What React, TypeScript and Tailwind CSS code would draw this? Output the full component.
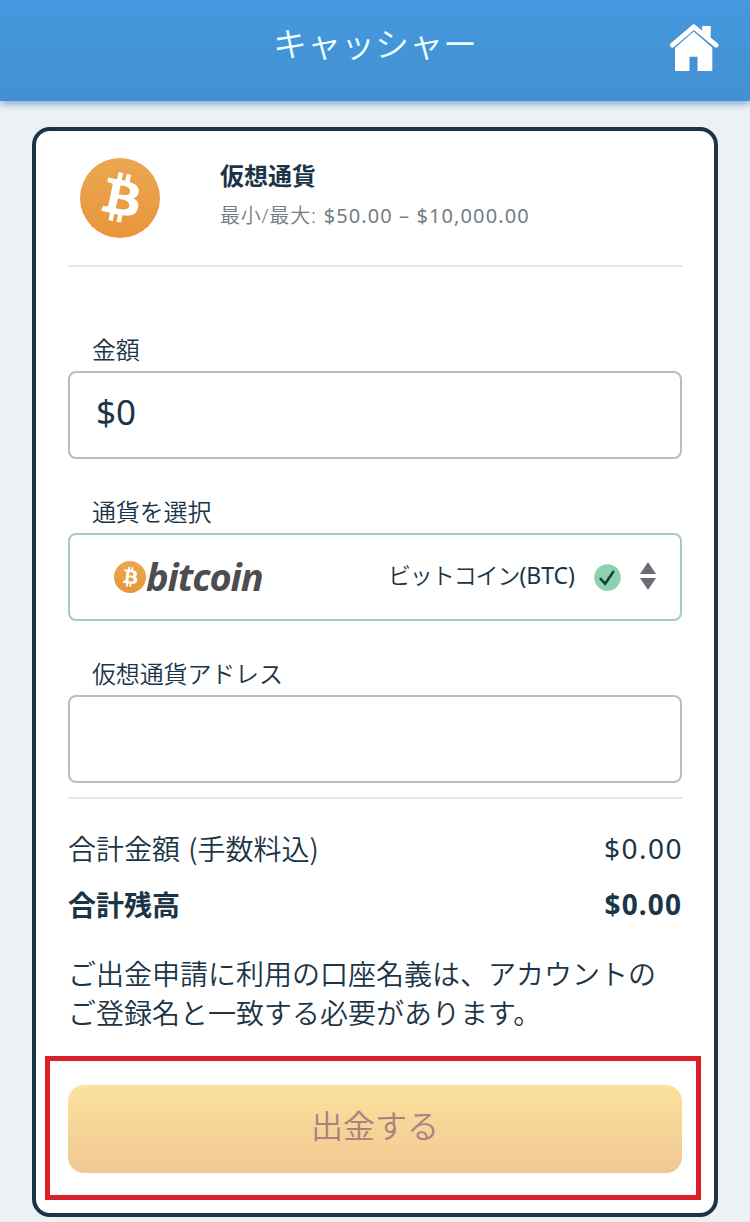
import React from "react";

function HomeIcon() {
  return (
    <svg width="49" height="48" viewBox="0 0 49 48" fill="white" aria-hidden="true">
      <path d="M32.3 10V2h8.2v16z" />
      <path d="M5 23.5 23.8 5.8 42.3 23.5V47H27.5V32.7h-8V47H5z" />
      <path d="M1.6 22 23.8 2.5 46.4 22" fill="none" stroke="#4294d6" strokeWidth="7.6" />
      <path d="M2.4 21.2 23.8 2.8 46 21.2" fill="none" stroke="white" strokeWidth="4.9" strokeLinecap="round" strokeLinejoin="round" />
      <path d="M32.3 2h8.2v13.5l-8.2-6.6z" />
    </svg>
  );
}

function Coin({ size, id, transform }: { size: number; id: string; transform: string }) {
  return (
    <svg width={size} height={size} viewBox="0 0 24 24" aria-hidden="true">
      <linearGradient id={id} x1="0" y1="0" x2="0" y2="1">
        <stop stopColor="#eaa851" />
        <stop offset="1" stopColor="#e9953a" />
      </linearGradient>
      <circle cx="12" cy="12" r="12" fill={`url(#${id})`} />
      <path
        transform={transform}
        fill="white"
        d="M17.288 10.291c.24-1.59-.974-2.45-2.64-3.03l.54-2.153-1.315-.33-.525 2.107c-.345-.087-.705-.167-1.064-.25l.526-2.127-1.32-.33-.54 2.165c-.285-.067-.565-.132-.84-.2l-1.815-.45-.35 1.407s.975.225.955.236c.535.136.63.486.615.766l-1.477 5.92c-.075.166-.24.406-.614.314.015.02-.96-.24-.96-.24l-.66 1.51 1.71.426.93.242-.54 2.19 1.32.327.54-2.17c.36.1.705.19 1.05.273l-.51 2.154 1.32.33.545-2.19c2.24.427 3.93.257 4.64-1.774.57-1.637-.03-2.58-1.217-3.196.854-.193 1.5-.76 1.68-1.93h.01zm-3.01 4.22c-.404 1.64-3.157.75-4.05.53l.72-2.9c.896.23 3.757.67 3.33 2.37zm.41-4.24c-.37 1.49-2.662.735-3.405.55l.654-2.64c.744.18 3.137.524 2.75 2.084v.006z"
      />
    </svg>
  );
}

function CheckBadge() {
  return (
    <svg width="27" height="27" viewBox="0 0 27 27" fill="none" aria-hidden="true">
      <circle cx="13.5" cy="13.5" r="13.3" fill="#8fd0b1" />
      <path d="m6.6 14.8 4.6 5L19.3 7.7" stroke="#123f3c" strokeWidth="2.5" strokeLinecap="round" />
    </svg>
  );
}

function SortArrows() {
  return (
    <svg width="16" height="28" viewBox="0 0 16 28" fill="#686c76" aria-hidden="true">
      <path d="M8 0l8 12H0zM8 28l8-12H0z" />
    </svg>
  );
}

function Label({ children }: { children: React.ReactNode }) {
  return <div className="flex h-[42px] items-center pl-6 text-[24px] leading-none tracking-[-0.15px]">{children}</div>;
}

const fieldClass = "flex h-[88px] items-center rounded-lg border-2 bg-white";

export default function App() {
  return (
    <div className="h-[1222px] overflow-hidden bg-[#ecf1f6] font-['Noto_Sans','Noto_Sans_CJK_JP',sans-serif] font-[350] text-[#1b3547]">
      <header className="grid h-[101px] grid-cols-[80px_1fr_80px] bg-linear-to-b from-[#4599de] to-[#4290d1] shadow-[0_3px_7px_rgba(65,125,175,0.6)]">
        <span />
        <h1 className="pt-[25px] text-center font-['Noto_Sans_CJK_JP',sans-serif] text-[34px] leading-[36px] font-[350] text-[#edffff]">キャッシャー</h1>
        <div className="pt-6">
          <HomeIcon />
        </div>
      </header>

      <main className="mt-[26px] ml-8 h-[1090px] w-[686px] rounded-[18px] border-4 border-[#1b3547] bg-white px-8">
        <section className="flex h-[136px] border-b-2 border-[#e5e7e8]">
          <div className="ml-3 pt-[27px]">
            <Coin size={80} id="coin-large" transform="translate(0.4 0) rotate(-2 12 12)" />
          </div>
          <div className="ml-[60px] pt-[29px]">
            <h2 className="text-[24px] leading-8 font-bold">仮想通貨</h2>
            <p className="mt-2 flex text-[20px] leading-8 text-[#747d85]">
              <span className="tracking-[0.8px]">最小/最大:</span>
              <span className="ml-[7px] font-normal tracking-[1.1px]">$50.00 – $10,000.00</span>
            </p>
          </div>
        </section>

        <section className="pt-[62px]">
          <Label>金額</Label>
          <div className={`${fieldClass} border-[#bbbcbe] px-[26px] pb-2 text-[35px] leading-none font-normal`}>$0</div>

          <div className="mt-8">
            <Label>通貨を選択</Label>
            <div className={`${fieldClass} border-[#a3cebb]`}>
              <div className="ml-11 flex items-center">
                <Coin size={32} id="coin-small" transform="translate(0.2 0) rotate(-7 12 12)" />
                <span className="pb-0.5 font-['Open_Sans',sans-serif] text-[38px] leading-none font-bold tracking-[-1.1px] text-[#4d4d4f] italic">bitcoin</span>
              </div>
              <div className="mr-6 ml-auto flex items-center">
                <span className="flex pb-[3px] text-[23px] leading-none">
                  <span className="tracking-[-1.1px]">ビットコイン</span>
                  <span className="font-normal">(BTC)</span>
                </span>
                <span className="ml-[19px]">
                  <CheckBadge />
                </span>
                <span className="ml-[19px] pb-0.5">
                  <SortArrows />
                </span>
              </div>
            </div>
          </div>

          <div className="mt-8">
            <Label>仮想通貨アドレス</Label>
            <div className={`${fieldClass} border-[#bbbcbe]`} />
          </div>
        </section>

        <section className="mt-3.5 border-t-2 border-[#e5e7e8] pt-[22px] text-[28px] leading-[56px]">
          <div className="flex h-14 justify-between">
            <span>
              合計金額 <span className="ml-px font-['Noto_Sans_CJK_JP',sans-serif] leading-none">(手数料込)</span>
            </span>
            <span className="-mr-px -mt-px font-normal tracking-[1.5px]">$0.00</span>
          </div>
          <div className="flex h-14 justify-between font-bold">
            <span>合計残高</span>
            <span className="-mt-px tracking-[1.1px]">$0.00</span>
          </div>
          <p className="mt-[22px] text-[28px] leading-[39px]">
            ご出金申請に利用の口座名義は、アカウントの
            <br />
            ご登録名と一致する必要があります。
          </p>
        </section>

        <div className="relative mt-[52px]">
          <button className="flex h-[88px] w-full items-center justify-center rounded-2xl bg-linear-to-b from-[#fbe29d] to-[#f0c792] pb-1.5 text-[32px] leading-none text-[#aa8180]">
            出金する
          </button>
          <div className="pointer-events-none absolute -top-[29px] -right-[19px] -bottom-[27px] -left-[23px] border-[5px] border-[#dc202b]" />
        </div>
      </main>
    </div>
  );
}
